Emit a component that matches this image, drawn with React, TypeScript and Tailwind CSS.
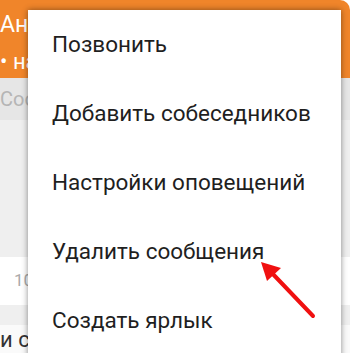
export default function App() {
  const items = ["Позвонить", "Добавить собеседников", "Настройки оповещений", "Удалить сообщения", "Создать ярлык"];

  return (
    <div className="relative h-[353px] w-[350px] overflow-hidden bg-white" style={{ fontFamily: "Roboto, 'Noto Sans', sans-serif" }}>
      {/* chat screen under the menu */}
      <div className="flex h-full flex-col">
        <div className="flex h-[78px] flex-col rounded-tr-[10px] bg-[#f0852a] pt-[10px] text-white">
          <span className="text-[23px] leading-[30px]">Ан</span>
          <span className="mt-[10px] text-[22px] leading-[24px]">• на</span>
        </div>
        <div className="flex h-[42px] items-center bg-[#e6e6e6] text-[20px] text-[#b5b5b5]">Соо</div>
        <div className="flex flex-1 flex-col bg-[#efefef]">
          <div className="h-[137px]" />
          <div className="flex h-[48px] items-center bg-white pl-[14px] text-[17px] text-[#aaa]">10:1</div>
          <div className="h-[20px]" />
          <div className="flex flex-1 items-end bg-[#fafafa] text-[22px] leading-[26px] text-[#333]">и се</div>
        </div>
      </div>

      {/* popup menu */}
      <div className="absolute left-[28px] top-[10px] h-[360px] w-[313px] bg-white shadow-[0_0_6px_rgba(0,0,0,0.45)]">
        {items.map((t) => (
          <div key={t} className="flex h-[69px] items-center pl-[24px] text-[22.5px] text-[#1f1f1f]">
            {t}
          </div>
        ))}
      </div>

      {/* red arrow */}
      <svg className="absolute left-0 top-0" width="350" height="353" viewBox="0 0 350 353">
        <line x1="313" y1="316" x2="270" y2="271" stroke="#f01010" strokeWidth="4" strokeLinecap="round" />
        <polygon points="261,262 281,268 267,281" fill="#f01010" />
      </svg>
    </div>
  );
}
